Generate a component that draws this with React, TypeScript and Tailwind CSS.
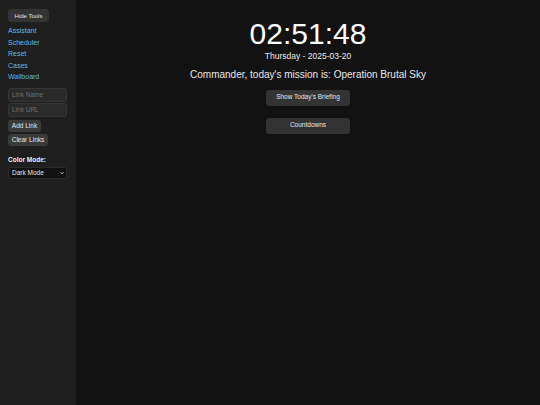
import React from 'react';

const links = ['Assistant', 'Scheduler', 'Reset', 'Cases', 'Wallboard'];

const Sidebar: React.FC = () => (
  <aside className="w-[76px] shrink-0 bg-[#1e1e1e] px-[8px] pt-[9px] flex flex-col items-start">
    <button className="h-[13px] w-[41px] rounded-[3px] bg-[#333333] text-[6px] leading-none text-[#e0e0e0]">
      Hide Tools
    </button>

    <nav className="mt-[3px] flex flex-col">
      {links.map((l) => (
        <a key={l} href="#" className="h-[11.6px] text-[7px] leading-[11.6px] text-[#5fb8e0]">
          {l}
        </a>
      ))}
    </nav>

    <div className="mt-[5px] flex flex-col gap-[1px]">
      <input
        placeholder="Link Name"
        className="h-[14px] w-[59px] rounded-[3px] border border-[#363636] bg-[#2a2a2a] px-[3px] text-[6.5px] text-[#ddd] placeholder:text-[#6f6f6f] outline-none"
      />
      <input
        placeholder="Link URL"
        className="h-[14px] w-[59px] rounded-[3px] border border-[#363636] bg-[#2a2a2a] px-[3px] text-[6.5px] text-[#ddd] placeholder:text-[#6f6f6f] outline-none"
      />
    </div>

    <button className="mt-[3px] h-[12px] w-[33px] rounded-[3px] bg-[#3a3a3a] text-[6.5px] leading-none text-[#e6e6e6]">
      Add Link
    </button>
    <button className="mt-[2px] h-[12px] w-[40px] rounded-[3px] bg-[#3a3a3a] text-[6.5px] leading-none text-[#e6e6e6]">
      Clear Links
    </button>

    <div className="mt-[11px] text-[6.5px] font-bold leading-none text-[#f0f0f0]">Color Mode:</div>
    <div className="relative mt-[4px] flex h-[12px] w-[59px] items-center">
      <select
        defaultValue="dark"
        className="block h-[12px] w-[59px] appearance-none rounded-[2px] border border-[#2a2a2a] bg-[#111111] py-0 pl-[3px] text-[6.5px] leading-none text-[#e6e6e6] outline-none"
      >
        <option value="dark">Dark Mode</option>
        <option value="light">Light Mode</option>
      </select>
      <svg
        viewBox="0 0 10 10"
        className="pointer-events-none absolute right-[3px] top-[4px] h-[4px] w-[4px]"
        fill="none"
        stroke="#e6e6e6"
        strokeWidth="2"
      >
        <path d="M1 3l4 4 4-4" />
      </svg>
    </div>
  </aside>
);

export default function App() {
  return (
    <div
      className="flex h-[405px] w-[540px] overflow-hidden bg-[#121212] text-white"
      style={{ fontFamily: '"Liberation Sans", Arial, sans-serif' }}
    >
      <Sidebar />
      <main className="flex flex-1 flex-col items-center pt-[19px]">
        <div className="text-[30px] leading-none text-white">02:51:48</div>
        <div className="mt-[3px] text-[8.5px] leading-none text-[#e8e8e8]">Thursday - 2025-03-20</div>
        <div className="mt-[9px] text-[10px] leading-none text-[#e6e6e6]">
          Commander, today's mission is: Operation Brutal Sky
        </div>
        <button className="mt-[10px] h-[16px] w-[84px] rounded-[3px] bg-[#333333] text-[6.5px] leading-none text-[#e6e6e6]">
          Show Today's Briefing
        </button>
        <button className="mt-[12px] h-[16px] w-[84px] rounded-[3px] bg-[#333333] text-[6.5px] leading-none text-[#e6e6e6]">
          Countdowns
        </button>
      </main>
    </div>
  );
}
